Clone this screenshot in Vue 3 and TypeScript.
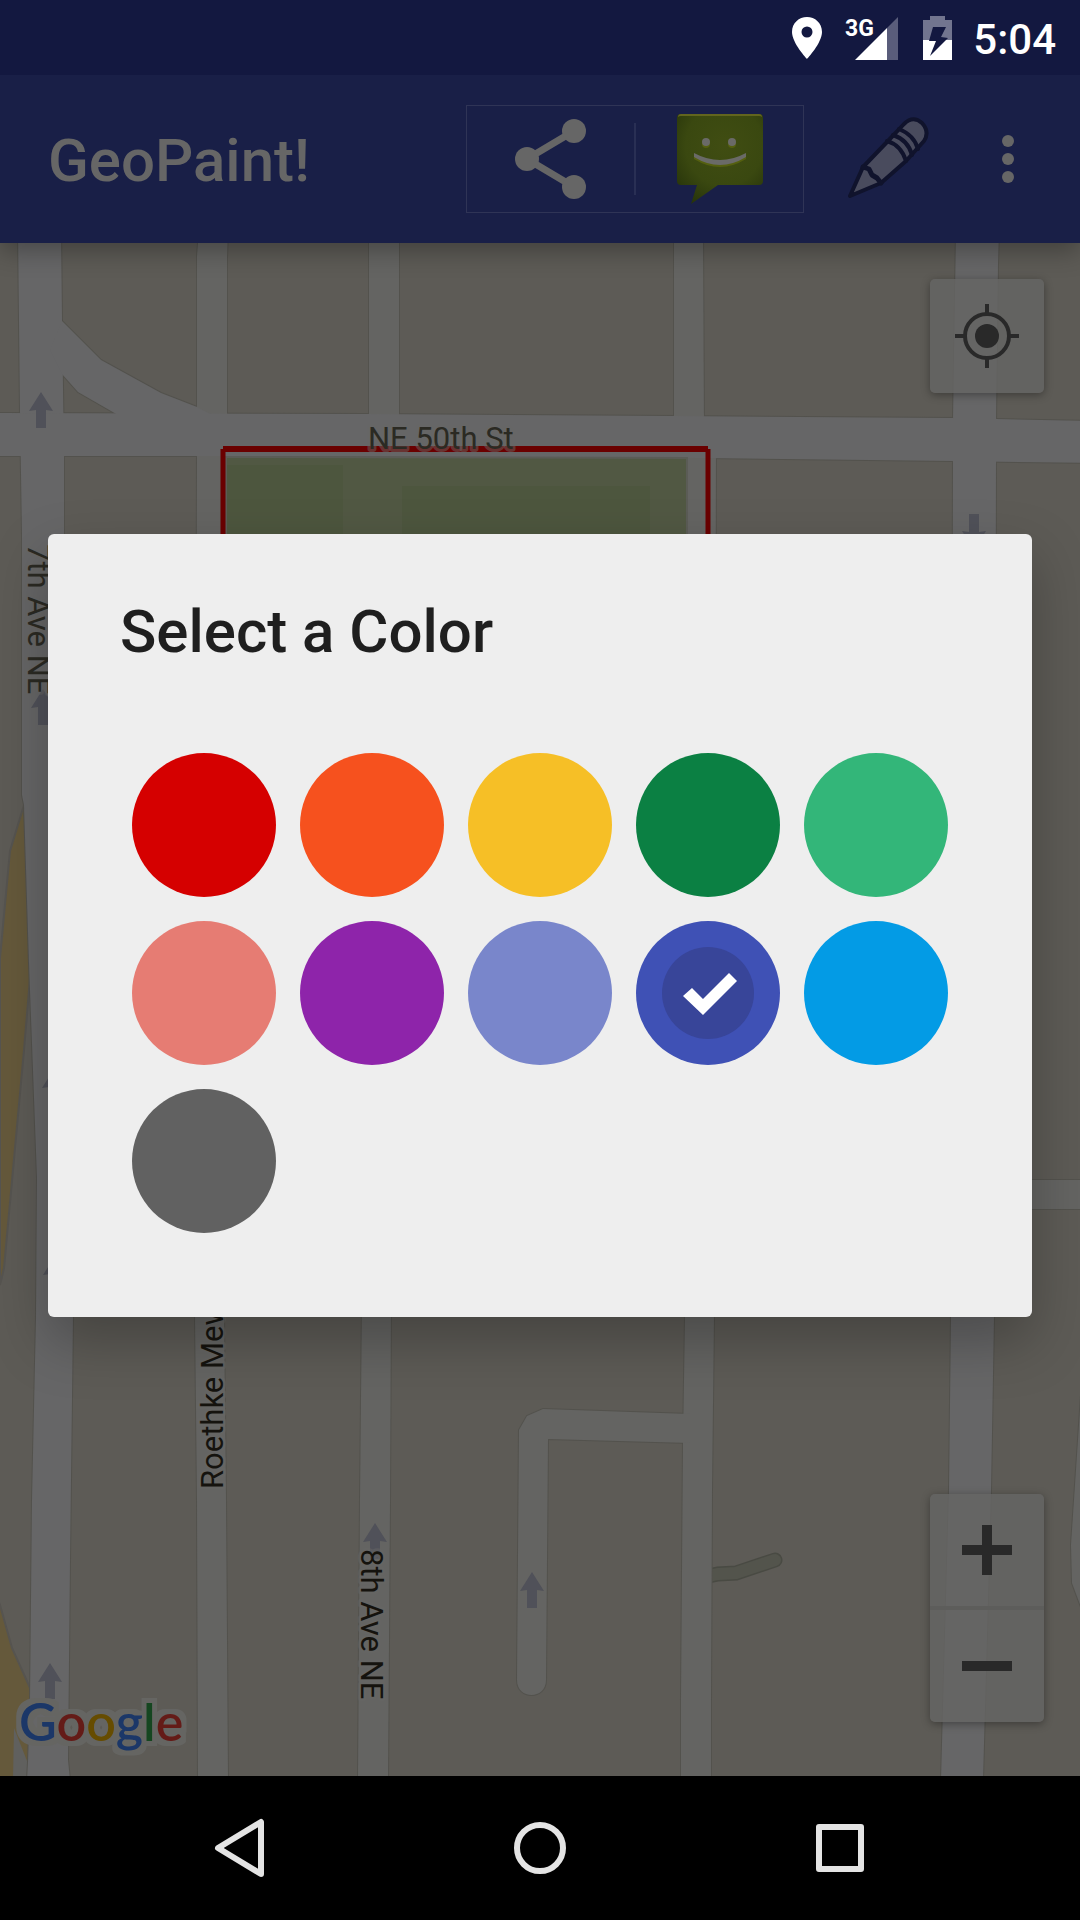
<script setup lang="ts">
import { ref } from 'vue'

interface Road {
  d: string
  kind: 'minor' | 'major'
}

interface Swatch {
  name: string
  value: string
}

const roads: Road[] = [
  { kind: 'minor', d: 'M199 230H228L227 258V414L226 456L224 1317L226 1500L228 1780H198L197 1500L195 1317L197 456V256Z' },
  { kind: 'minor', d: 'M369 230H399V430H369Z' },
  { kind: 'minor', d: 'M674 230H703L704 430H674Z' },
  { kind: 'minor', d: 'M687 440H716L714 1317L712 1490L711 1700V1780H681V1700L683 1443L685 1317Z' },
  { kind: 'minor', d: 'M362 1300H391L390 1500L388 1780H358L360 1500Z' },
  { kind: 'minor', d: 'M690 1414L543 1409L527 1416L519 1430L517 1680C517 1700 546 1700 546 1680L548 1439L690 1443Z' },
  { kind: 'minor', d: 'M1000 1180H1090V1209H1000Z' },
  { kind: 'minor', d: 'M1090 1380H1082L1071 1545L1072 1583L1084 1615H1090Z' },
  { kind: 'major', d: 'M18 230H61L62 320L64 456V534L73 1317L70 1560L68 1760L70 1780H27L28 1762L30 1700L32 1500L36 1317L37 1178L29 963L24 805L22 795V534L20 412Z' },
  { kind: 'major', d: 'M-9 413L369 414L674 416L953 418L1090 421V463L953 461L704 458L226 456H-9Z' },
  { kind: 'major', d: 'M956 230H999L998 265L996 420V462L994 1317L991 1490L983 1780H941L949 1490L951 1317L953 461V420Z' },
  { kind: 'major', d: 'M62 321L101 360L161 393L197 407L212 415H118L78 392L62 374L50 350Z' }
]

const upArrows: [number, number][] = [
  [41, 392],
  [43, 689],
  [54, 1069],
  [55, 1256],
  [375, 1523],
  [50, 1663],
  [532, 1572]
]

const swatches: Swatch[] = [
  { name: 'Red', value: '#d50000' },
  { name: 'Orange', value: '#f6511e' },
  { name: 'Yellow', value: '#f6bf26' },
  { name: 'Green', value: '#0b8043' },
  { name: 'Light green', value: '#33b679' },
  { name: 'Pink', value: '#e67c73' },
  { name: 'Purple', value: '#8e24aa' },
  { name: 'Lavender', value: '#7986cb' },
  { name: 'Indigo', value: '#3f51b5' },
  { name: 'Blue', value: '#039be5' },
  { name: 'Gray', value: '#616161' }
]

const selected = ref('#3f51b5')
</script>

<template>
  <div class="screen">
    <header class="status">
      <svg width="30" height="44" viewBox="0 0 30 44" aria-hidden="true">
        <path fill="#fff" fill-rule="evenodd" d="M15 1C7 1 0 7 0 16C0 27 15 43 15 43S30 27 30 16C30 7 23 1 15 1ZM15 10.500A5.500 5.500 0 1 1 15 21.500A5.500 5.500 0 1 1 15 10.500Z" />
      </svg>
      <svg class="signal" width="53" height="44" viewBox="0 0 53 44" role="img" aria-label="3G signal">
        <path fill="#5a5d7b" d="M52 1V44H41V12Z" />
        <path fill="#fff" d="M9 44L41 12V44Z" />
        <text class="network" x="-1" y="20">3G</text>
      </svg>
      <svg class="battery" width="29" height="44" viewBox="0 0 29 44" aria-hidden="true">
        <path fill="#72758f" d="M7 0H22V4H29V24H0V4H7Z" />
        <path fill="#fff" d="M0 24H29V44H0Z" />
        <path fill="#131840" d="M10 11H23L18 21L25 22L7 40L13 25L6 25Z" />
      </svg>
      <span class="time">5:04</span>
    </header>

    <div class="body">
      <header class="appbar">
        <h1>GeoPaint!</h1>
        <div class="share">
          <button type="button" aria-label="Share">
            <svg width="72" height="80" viewBox="0 0 72 80">
              <path d="M59 12L12 40L59 68" fill="none" stroke="#666" stroke-width="7" />
              <g fill="#666">
                <circle cx="59" cy="12" r="12" />
                <circle cx="12" cy="40" r="12" />
                <circle cx="59" cy="68" r="12" />
              </g>
            </svg>
          </button>
          <span class="rule"></span>
          <button type="button" aria-label="Messenger">
            <svg width="88" height="92" viewBox="0 0 88 92">
              <defs>
                <radialGradient id="bubble" cx="55%" cy="35%" r="75%">
                  <stop offset="0" stop-color="#404d12" />
                  <stop offset="0.600" stop-color="#3a4810" />
                  <stop offset="1" stop-color="#26330a" />
                </radialGradient>
              </defs>
              <path d="M5 1H83Q87 1 87 5V68Q87 72 83 72H42L15 91L21 72H5Q1 72 1 68V5Q1 1 5 1Z" fill="url(#bubble)" />
              <path d="M2 4Q2 1 5 1H83Q86 1 86 4Q85 3 83 3H5Q3 3 2 4Z" fill="#62651e" />
              <g fill="#55600f">
                <circle cx="30" cy="31" r="4" />
                <circle cx="56" cy="31" r="4" />
                <path d="M18 43Q44 56 70 43V46Q44 62 18 46Z" />
              </g>
              <g fill="#6a6a67">
                <circle cx="30" cy="29" r="4" />
                <circle cx="56" cy="29" r="4" />
                <path d="M18 40Q44 54 70 40V44Q44 60 18 44Z" />
              </g>
            </svg>
          </button>
        </div>
        <button type="button" class="pencil" aria-label="Draw">
          <svg width="90" height="90" viewBox="0 0 90 90" stroke="#10132c" stroke-width="4" stroke-linejoin="round" stroke-linecap="round">
            <path d="M7 82L20 53L44 28L61 10Q70 1 79 9Q87 18 81 27L63 47L38 69Z" fill="#494b5d" />
            <path d="M20 53L26 55L29 61L34 64L38 69" fill="none" stroke-width="5" />
            <path d="M44 27Q58 31 63 47M50 21Q65 26 69 41M56 15Q71 21 75 35" fill="none" />
          </svg>
        </button>
        <button type="button" class="more" aria-label="More options">
          <svg width="12" height="48" viewBox="0 0 12 48" fill="#666">
            <circle cx="6" cy="6" r="6" />
            <circle cx="6" cy="24" r="6" />
            <circle cx="6" cy="42" r="6" />
          </svg>
        </button>
      </header>

      <main class="map">
        <svg class="canvas" viewBox="0 243 1080 1533" preserveAspectRatio="xMidYMin slice" role="img" aria-label="Map">
          <defs>
            <filter id="halo" x="-10%" y="-20%" width="120%" height="140%" color-interpolation-filters="sRGB">
              <feMorphology in="SourceAlpha" operator="dilate" radius="5" result="grown" />
              <feFlood flood-color="#656562" />
              <feComposite in2="grown" operator="in" result="edge" />
              <feMerge>
                <feMergeNode in="edge" />
                <feMergeNode in="SourceGraphic" />
              </feMerge>
            </filter>
          </defs>
          <rect x="-10" y="230" width="1100" height="1560" fill="#5d5b56" />
          <path d="M29 800L24 805L10 851L0 958V1285L4 1268L24 1050L31 967Z" fill="#65593b" stroke="#565450" stroke-width="2" />
          <path d="M-4 1595L0 1605L12 1648L31 1690V1780H-4Z" fill="#65593b" stroke="#565450" stroke-width="2" />
          <path d="M14 1728L29 1766V1780H13Z" fill="#60605e" />
          <path d="M690 1580L718 1574L736 1573L775 1560" class="path-edge" />
          <path d="M690 1580L718 1574L736 1573L775 1560" class="path-fill" />
          <path v-for="road in roads" :key="'c' + road.d" :d="road.d" class="casing" />
          <path v-for="road in roads" :key="road.d" :d="road.d" :class="road.kind" />

          <path d="M226 457L687 458V600H226Z" fill="#515843" stroke="#5b5c56" stroke-width="2" />
          <path d="M227 465H343V600H227ZM402 486H650V600H402Z" fill="#4d563e" />
          <path d="M223 449H708" class="red" stroke-width="6" />
          <path d="M223 449V600M708 449V600" class="red" stroke-width="5" />

          <path v-for="[x, y] in upArrows" :key="y" :transform="`translate(${x} ${y})`" class="arrow" d="M0 0L12 19L5 18V36H-5V18L-12 19Z" />
          <path transform="translate(974 550) rotate(180)" class="arrow" d="M0 0L12 19L5 18V36H-5V18L-12 19Z" />

          <text class="street" x="368" y="449">NE 50th St</text>
          <text class="street" transform="translate(28 544) rotate(90)">7th Ave NE</text>
          <text class="street dark" transform="translate(361 1549) rotate(90)">8th Ave NE</text>
          <text class="street dark" transform="translate(223 1489) rotate(-90)">Roethke Mews</text>
          <text class="logo" x="19" y="1741" filter="url(#halo)"><tspan fill="#1b3768">G</tspan><tspan fill="#641b17">o</tspan><tspan fill="#664c00">o</tspan><tspan fill="#1b3768">g</tspan><tspan fill="#154620">l</tspan><tspan fill="#641b17">e</tspan></text>
        </svg>

        <div class="controls">
          <button type="button" class="locate" aria-label="My location">
            <svg width="64" height="64" viewBox="0 0 64 64" stroke="#292929" stroke-width="4">
              <circle cx="32" cy="32" r="22" fill="none" />
              <circle cx="32" cy="32" r="12" fill="#292929" stroke="none" />
              <path d="M32 0V9M32 55V64M0 32H9M55 32H64" />
            </svg>
          </button>
          <div class="zoom">
            <button type="button" aria-label="Zoom in">
              <svg width="50" height="50" viewBox="0 0 50 50"><path d="M25 0V50M0 25H50" stroke="#292929" stroke-width="10" /></svg>
            </button>
            <button type="button" aria-label="Zoom out">
              <svg width="50" height="50" viewBox="0 0 50 50"><path d="M0 25H50" stroke="#292929" stroke-width="10" /></svg>
            </button>
          </div>
        </div>
      </main>

      <div class="overlay">
        <section class="dialog" role="dialog" aria-labelledby="dialog-title">
          <h2 id="dialog-title">Select a Color</h2>
          <div class="palette" role="radiogroup" aria-labelledby="dialog-title">
            <label v-for="s in swatches" :key="s.value" class="swatch" :style="{ backgroundColor: s.value }">
              <input v-model="selected" type="radio" name="color" :value="s.value" :aria-label="s.name" />
              <svg v-if="selected === s.value" width="144" height="144" viewBox="0 0 144 144" aria-hidden="true">
                <circle cx="72" cy="72" r="46" fill="#384599" />
                <path d="M47 75L56 67L67 78L93 52L101 60L67 94Z" fill="#fff" />
              </svg>
            </label>
          </div>
        </section>
      </div>
    </div>

    <nav class="navbar">
      <button type="button" aria-label="Back">
        <svg width="60" height="60" viewBox="0 0 60 60"><path d="M51 4V56L8 30Z" /></svg>
      </button>
      <button type="button" aria-label="Home">
        <svg width="60" height="60" viewBox="0 0 60 60"><circle cx="30" cy="30" r="23" /></svg>
      </button>
      <button type="button" aria-label="Recent apps">
        <svg width="60" height="60" viewBox="0 0 60 60"><rect x="9" y="9" width="42" height="42" /></svg>
      </button>
    </nav>
  </div>
</template>

<style>
body {
  margin: 0;
  background: #000;
}
</style>

<style scoped>
.screen {
  display: flex;
  flex-direction: column;
  min-height: 100vh;
  overflow: hidden;
  font-family: Roboto, "Liberation Sans", sans-serif;
}

button {
  display: flex;
  align-items: center;
  justify-content: center;
  margin: 0;
  padding: 0;
  border: 0;
  background: none;
  cursor: pointer;
}

svg {
  display: block;
}

.status {
  position: relative;
  z-index: 3;
  display: flex;
  align-items: center;
  justify-content: flex-end;
  height: 75px;
  padding-right: 24px;
  background: #131840;
}

.signal {
  margin-left: 24px;
  overflow: visible;
}

.battery {
  margin: 0 21px 0 24px;
}

.network {
  fill: #fff;
  font-size: 23px;
  font-weight: 700;
}

.time {
  color: #fff;
  font-size: 42px;
  font-weight: 500;
  line-height: 48px;
  padding-top: 4px;
}

.body {
  position: relative;
  display: flex;
  flex: 1;
  flex-direction: column;
}

.appbar {
  position: relative;
  z-index: 1;
  display: flex;
  align-items: center;
  height: 168px;
  padding: 0 24px 0 48px;
  background: #191f47;
  box-shadow: 0 8px 24px rgba(0, 0, 0, 0.3);
}

h1 {
  flex: 1;
  margin: 0;
  padding-top: 4px;
  color: #666;
  font-size: 60px;
  font-weight: 500;
  line-height: 72px;
}

.share {
  display: flex;
  align-items: center;
  width: 336px;
  height: 106px;
  margin-right: 12px;
  border: 1px solid #2f3456;
}

.share button {
  flex: 1;
  height: 100%;
}

.rule {
  width: 2px;
  height: 72px;
  background: #292f54;
}

.pencil {
  width: 144px;
  height: 144px;
}

.more {
  width: 96px;
  height: 144px;
}

.map {
  position: relative;
  display: flex;
  flex: 1;
  min-height: 600px;
  overflow: hidden;
}

.canvas {
  position: absolute;
  inset: 0;
  width: 100%;
  height: 100%;
}

.casing {
  fill: none;
  stroke: #53524d;
  stroke-width: 2;
}

.minor {
  fill: #646462;
}

.major {
  fill: #666667;
}

.path-edge {
  fill: none;
  stroke: #494a43;
  stroke-width: 15;
  stroke-linecap: round;
}

.path-fill {
  fill: none;
  stroke: #53544c;
  stroke-width: 12;
  stroke-linecap: round;
}

.red {
  fill: none;
  stroke: #6a0000;
}

.arrow {
  fill: #505159;
}

.street {
  fill: #2b2a23;
  font-size: 31px;
  paint-order: stroke;
  stroke: rgba(102, 102, 101, 0.5);
  stroke-width: 6px;
  stroke-linejoin: round;
}

.dark {
  fill: #15130e;
}

.logo {
  font-family: Lato, Roboto, sans-serif;
  font-size: 52px;
  font-weight: 600;
}

.controls {
  position: relative;
  display: flex;
  flex: 1;
  flex-direction: column;
  align-items: flex-end;
  justify-content: space-between;
  padding: 36px 36px 54px;
}

.locate,
.zoom {
  width: 114px;
  border-radius: 5px;
  background: rgba(101, 101, 100, 0.8);
  box-shadow: 0 2px 8px rgba(0, 0, 0, 0.35);
}

.locate {
  height: 114px;
}

.zoom button {
  width: 100%;
  height: 112px;
}

.zoom button + button {
  height: 116px;
  border-top: 4px solid #5d5d5b;
}

.overlay {
  position: absolute;
  inset: 0;
  z-index: 2;
  display: flex;
  align-items: center;
  justify-content: center;
  padding: 0 48px;
}

.dialog {
  box-sizing: border-box;
  width: 100%;
  max-width: 984px;
  padding: 60px 72px 84px;
  border-radius: 6px;
  background: #eee;
  box-shadow: 0 24px 56px rgba(0, 0, 0, 0.26);
}

h2 {
  margin: 0;
  color: #1f1f1f;
  font-size: 60px;
  font-weight: 500;
  line-height: 75px;
}

.palette {
  display: flex;
  flex-wrap: wrap;
  gap: 24px;
  padding: 84px 12px 0;
}

.swatch {
  width: 144px;
  height: 144px;
  border-radius: 50%;
  overflow: hidden;
  display: grid;
  cursor: pointer;
}

.swatch > * {
  grid-area: 1 / 1;
}

.swatch input {
  width: 144px;
  height: 144px;
  margin: 0;
  appearance: none;
}

.navbar {
  display: flex;
  justify-content: center;
  height: 144px;
  background: #000;
}

.navbar button {
  flex: 1;
  max-width: 300px;
}

.navbar svg {
  fill: none;
  stroke: #e4e4e4;
  stroke-width: 6;
  stroke-linejoin: round;
}
</style>
